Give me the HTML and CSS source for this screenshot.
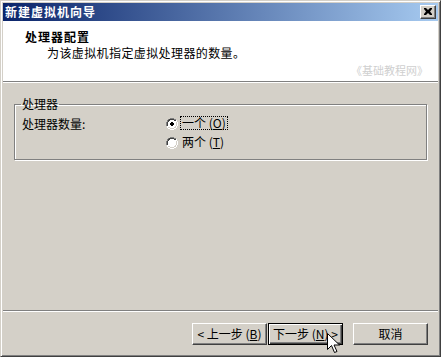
FILE: index.html
```html
<!DOCTYPE html>
<html>
<head>
<meta charset="utf-8">
<link rel="stylesheet" href="styles.css">
</head>
<body>
<div class="window">
  <div class="titlebar">
    <span class="title">新建虚拟机向导</span>
    <span class="close"><svg width="8" height="7" viewBox="0 0 8 7"><path d="M0 0h2l2 2 2-2h2v1l-2 2.5 2 2.5v1h-2l-2-2-2 2h-2v-1l2-2.5-2-2.5z" fill="#000"/></svg></span>
  </div>
  <div class="header">
    <div class="h-title">处理器配置</div>
    <div class="h-sub">为该虚拟机指定虚拟处理器的数量。</div>
    <div class="watermark">《基础教程网》</div>
  </div>
  <div class="body">
    <fieldset class="group">
      <legend>处理器</legend>
      <div class="grid">
        <div class="lbl">处理器数量:</div>
        <div class="opts">
          <div class="opt">
            <svg class="radio" width="12" height="12" viewBox="0 0 12 12"><path d="M4 0h4v1h2v1h1v2h1v4h-1v2h-1v1h-2v1h-4v-1h-2v-1h-1v-2h-1v-4h1v-2h1v-1h2z" fill="#fff"/><path d="M4 0h4v1h2v1h-2v-1h-4v1h-2v2h-1v4h-1v-4h1v-2h1v-1h2z" fill="#808080"/><path d="M4 1h4v1h2v1h-2v-1h-4v1h-1v1h-1v4h-1v-4h1v-2h1v-1h1z" fill="#404040"/><path d="M11 4h1v4h-1v2h-1v1h-2v1h-4v-1h-2v-1h2v1h4v-1h2v-2h1z" fill="#fff"/><path d="M10 4h1v4h-1v2h-2v1h-4v-1h-2v-1h2v1h4v-1h1v-1h1z" fill="#d4d0c8"/><path d="M5 4h2v1h1v2h-1v1h-2v-1h-1v-2h1z" fill="#000"/></svg>
            <span class="otext focus">一个 (<u>O</u>)</span>
          </div>
          <div class="opt">
            <svg class="radio" width="12" height="12" viewBox="0 0 12 12"><path d="M4 0h4v1h2v1h1v2h1v4h-1v2h-1v1h-2v1h-4v-1h-2v-1h-1v-2h-1v-4h1v-2h1v-1h2z" fill="#fff"/><path d="M4 0h4v1h2v1h-2v-1h-4v1h-2v2h-1v4h-1v-4h1v-2h1v-1h2z" fill="#808080"/><path d="M4 1h4v1h2v1h-2v-1h-4v1h-1v1h-1v4h-1v-4h1v-2h1v-1h1z" fill="#404040"/><path d="M11 4h1v4h-1v2h-1v1h-2v1h-4v-1h-2v-1h2v1h4v-1h2v-2h1z" fill="#fff"/><path d="M10 4h1v4h-1v2h-2v1h-4v-1h-2v-1h2v1h4v-1h1v-1h1z" fill="#d4d0c8"/></svg>
            <span class="otext">两个 (<u>T</u>)</span>
          </div>
        </div>
      </div>
    </fieldset>
  </div>
  <div class="footer">
    <button class="btn">&lt; 上一步 (<u>B</u>)</button>
    <button class="btn default">下一步 (<u>N</u>) &gt;</button>
    <button class="btn cancel">取消</button>
  </div>
  <svg class="cursor" width="13" height="21" viewBox="0 0 13 21"><path d="M0.5 0.5v16l4-4 3 7 2.5-1-3-6.5h5.5z" fill="#fff" stroke="#000" stroke-width="1" stroke-linejoin="miter"/></svg>
</div>
</body>
</html>
```

FILE: styles.css
```css
* { box-sizing: border-box; }
html, body { margin: 0; padding: 0; }
body {
  background: #d4d0c8;
  font-family: "Noto Sans CJK SC", "DejaVu Sans", sans-serif;
  font-size: 12px;
  color: #000;
}
.window {
  position: relative;
  width: 441px;
  height: 357px;
  background: #d4d0c8;
  border: 1px solid;
  border-color: #d4d0c8 #404040 #404040 #d4d0c8;
  box-shadow: inset 1px 1px #fff, inset -1px -1px #808080;
  padding: 2px;
  display: flex;
  flex-direction: column;
}
.titlebar {
  height: 18px;
  flex: none;
  background: linear-gradient(to right, #0a246a, #a6caf0);
  display: flex;
  align-items: center;
  justify-content: space-between;
  padding: 0 2px 0 2px;
}
.title {
  color: #fff;
  font-weight: bold;
  font-size: 12px;
  letter-spacing: 1px;
  line-height: 14px;
}
.close {
  width: 16px;
  height: 14px;
  background: #d4d0c8;
  border: 1px solid;
  border-color: #fff #404040 #404040 #fff;
  box-shadow: inset -1px -1px #808080;
  display: flex;
  align-items: center;
  justify-content: center;
  padding: 0 1px 1px 0;
}
.close svg { display: block; }
.header {
  flex: none;
  height: 61px;
  margin-top: 0;
  background: #fff;
  border-bottom: 1px solid #808080;
  box-shadow: 0 1px #fff;
  padding: 9px 0 0 22px;
  display: flex;
  flex-direction: column;
  margin-bottom: 1px;
}
.h-title {
  font-weight: bold;
  letter-spacing: 1px;
  line-height: 14px;
}
.h-sub {
  line-height: 14px;
  margin-top: 2px;
  padding-left: 22px;
  letter-spacing: 0.4px;
}
.watermark {
  line-height: 13px;
  font-size: 11px;
  color: #cfcfcf;
  text-align: right;
  padding-right: 10px;
  margin-top: 4px;
}
.body {
  flex: 1;
  padding: 14px 11px 0 11px;
}
.group {
  margin: 0;
  border: 1px solid #808080;
  box-shadow: inset 1px 1px #fff, 1px 1px #fff;
  padding: 5px 7px 3px 7px;
  height: 63px;
}
.group legend {
  padding: 0 1px;
  line-height: 14px;
  margin-left: -1px;
}
.grid {
  display: grid;
  grid-template-columns: 144px 1fr;
}
.lbl { line-height: 14px; padding-top: 1px; }
.opts { display: flex; flex-direction: column; gap: 5px; }
.opt {
  display: flex;
  align-items: center;
  height: 14px;
}
.radio { display: block; margin-top: 1px; }
.otext {
  margin-left: 2px;
  padding: 0 1px;
  line-height: 12px;
  border: 1px dotted transparent;
  letter-spacing: 0;
}
.otext.focus { border-color: #000; }
u { text-decoration: underline; text-underline-offset: 1px; }
.footer {
  flex: none;
  height: 44px;
  border-top: 1px solid #808080;
  box-shadow: inset 0 1px #fff;
  display: flex;
  justify-content: flex-end;
  align-items: flex-start;
  padding: 12px 10px 0 0;
}
.btn {
  width: 75px;
  height: 22px;
  font-family: inherit;
  font-size: 12px;
  color: #000;
  background: #d4d0c8;
  border: 1px solid;
  border-color: #fff #404040 #404040 #fff;
  box-shadow: inset -1px -1px #808080;
  padding: 0;
  line-height: 14px;
  margin: 0;
}
.btn.default {
  margin-left: 1px;
  border: 1px solid #000;
  box-shadow: inset 1px 1px #fff, inset -1px -1px #404040, inset -2px -2px #808080;
}
.btn.cancel { margin-left: 10px; }
.cursor {
  position: absolute;
  left: 326px;
  top: 332px;
}
```
